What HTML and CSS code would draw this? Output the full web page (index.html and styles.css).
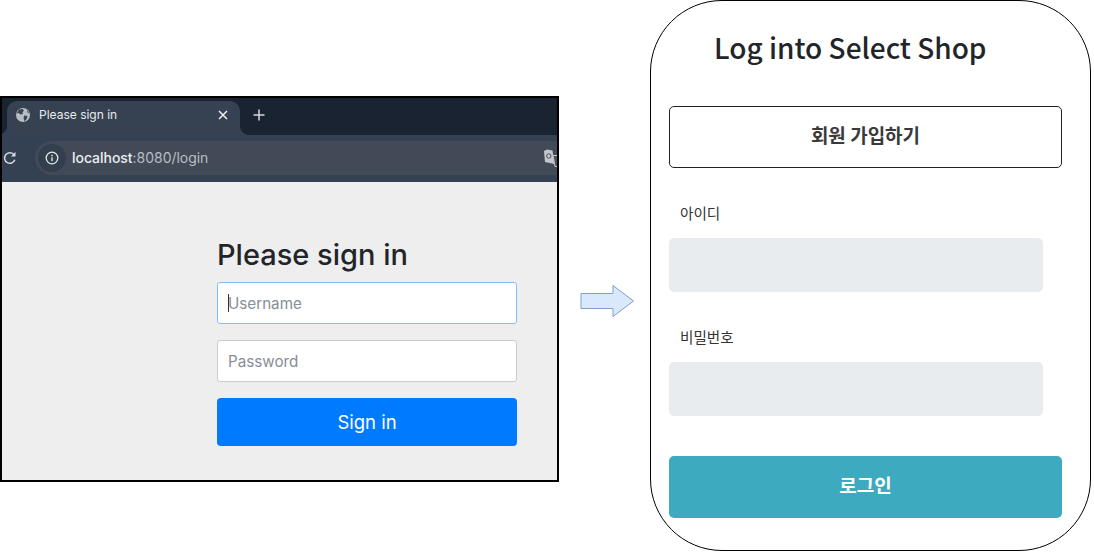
FILE: index.html
```html
<!DOCTYPE html>
<html lang="en">
<head>
  <meta charset="UTF-8" />
  <title>Log into Select Shop</title>
  <link rel="stylesheet" href="styles.css">
</head>
<body>
  <div class="browser">
    <div class="tabbar">
      <div class="tab">
        <svg class="globe" width="16" height="16" viewBox="0 0 16 16">
          <circle cx="8" cy="8" r="7" fill="#b9bdc3" />
          <path d="M4 2.4 7.6 2 9 3.6 7.4 5.4 8 7 5.6 7.6 3.4 6 1.6 6.4ZM9 8.4 12.4 9 12 11.6 9.6 14.4 8.6 11.4ZM12 3 14.4 6 12.4 5.6Z" fill="#3a4656" />
        </svg>
        <span class="tab-title">Please sign in</span>
        <svg class="tab-close" width="10" height="10" viewBox="0 0 10 10">
          <path d="M1 1 9 9M9 1 1 9" stroke="#eef0f2" stroke-width="1.5" fill="none" />
        </svg>
      </div>
      <svg class="tab-new" width="12" height="12" viewBox="0 0 12 12">
        <path d="M6 .5V11.5M.5 6H11.5" stroke="#d5d8dc" stroke-width="1.5" fill="none" />
      </svg>
    </div>
    <div class="toolbar">
      <svg class="reload" width="14" height="14" viewBox="0 0 13 13">
        <path d="M11 8.2A4.9 4.9 0 1 1 10 3.2" stroke="#d5d8dc" stroke-width="1.4" fill="none" />
        <path d="M11.6 .8V5H7.4Z" fill="#d5d8dc" />
      </svg>
      <div class="address">
        <span class="site-info">
          <svg width="14" height="14" viewBox="0 0 14 14">
            <circle cx="7" cy="7" r="5.8" stroke="#e6e8ea" stroke-width="1.3" fill="none" />
            <path d="M7 6.2V10.2M7 3.8V5.2" stroke="#e6e8ea" stroke-width="1.4" fill="none" />
          </svg>
        </span>
        <span class="url"><b>localhost</b>:8080/login</span>
        <svg class="translate" width="16" height="18" viewBox="0 0 16 18">
          <path d="M0 2 3 .5 8.500 1.500 10.500 15 1 13Z" fill="#c4c6cb" />
          <circle cx="4.800" cy="7" r="2.200" stroke="#4a505c" stroke-width="1" fill="none" />
          <path d="M9 6.500H16V17.500H11Z" fill="#4a505c" stroke="#c4c6cb" />
        </svg>
      </div>
    </div>
    <div class="login-page">
      <form class="signin">
        <h2>Please sign in</h2>
        <div class="signin-field">
          <input class="signin-input focused" type="text" placeholder="Username" />
          <span class="caret"></span>
        </div>
        <div class="signin-field">
          <input class="signin-input" type="password" placeholder="Password" />
        </div>
        <button class="signin-btn" type="button">Sign in</button>
      </form>
    </div>
  </div>

  <svg class="arrow" width="56" height="34" viewBox="0 0 56 34">
    <path d="M1 9.500H33V1.500L53.500 17 33 32.500V24.500H1Z" fill="#dae8fc" stroke="#7f9fcc" stroke-width="1" />
  </svg>

  <div class="card">
    <h1>Log into Select Shop</h1>
    <button class="join-btn" type="button">회원 가입하기</button>
    <label class="card-label" for="userId">아이디</label>
    <input class="card-input" id="userId" type="text" />
    <label class="card-label second" for="userPw">비밀번호</label>
    <input class="card-input" id="userPw" type="password" />
    <button class="login-btn" type="button">로그인</button>
  </div>
</body>
</html>
```

FILE: styles.css
```css
html, body {
  height: 100%;
  margin: 0;
  overflow: hidden;
  background-color: #fff;
}

body {
  display: flex;
  align-items: flex-start;
}

/* left: browser capture */
.browser {
  width: 555px;
  height: 382px;
  margin-top: 96px;
  border: 2px solid #000;
  display: flex;
  flex-direction: column;
  overflow: hidden;
  flex-shrink: 0;
  font-family: Inter, "Liberation Sans", sans-serif;
}

.tabbar {
  height: 37px;
  background-color: #1a2332;
  display: flex;
  align-items: flex-end;
  padding-left: 5px;
  flex-shrink: 0;
}

.tab {
  position: relative;
  width: 233px;
  height: 34px;
  box-sizing: border-box;
  background-color: #364252;
  border-radius: 10px 10px 0 0;
  display: flex;
  align-items: center;
  padding: 0 12px 6px 8px;
}

.tab::before, .tab::after {
  content: "";
  position: absolute;
  bottom: 0;
  width: 10px;
  height: 10px;
}

.tab::before {
  left: -10px;
  background: radial-gradient(circle at 0 0, #1a2332 10px, #364252 10.5px);
}

.tab::after {
  right: -10px;
  background: radial-gradient(circle at 100% 0, #1a2332 10px, #364252 10.5px);
}

.tab-title {
  margin-left: 8px;
  margin-bottom: 2px;
  flex: 1;
  font-size: 12px;
  color: #e8eaec;
}

.tab-new {
  margin: 0 0 14px 13px;
}

.toolbar {
  height: 47px;
  box-sizing: border-box;
  padding-bottom: 2px;
  background-color: #344152;
  display: flex;
  align-items: center;
  flex-shrink: 0;
}

.reload {
  margin-left: 1px;
  flex-shrink: 0;
}

.address {
  margin-left: 18px;
  flex: 1;
  height: 34px;
  background-color: #434a57;
  border-radius: 17px 0 0 17px;
  display: flex;
  align-items: center;
  padding-left: 3px;
}

.site-info {
  width: 28px;
  height: 28px;
  border-radius: 50%;
  background-color: #333f4f;
  display: flex;
  align-items: center;
  justify-content: center;
}

.url {
  margin-left: 6px;
  margin-bottom: 1px;
  flex: 1;
  font-size: 14px;
  letter-spacing: -0.03px;
  color: #b9bdc4;
}

.url b {
  font-weight: 500;
  color: #eceef0;
}

.translate {
  margin-right: -3px;
}

.login-page {
  flex: 1;
  background-color: #eee;
  padding-left: 215px;
}

.signin {
  width: 300px;
  padding-top: 55px;
}

.signin h2 {
  margin: 0 0 9px;
  font-size: 29px;
  font-weight: 500;
  line-height: 36px;
  color: #212529;
}

.signin-field {
  position: relative;
  margin-bottom: 16px;
}

.signin-input {
  display: block;
  width: 100%;
  height: 42px;
  box-sizing: border-box;
  padding: 0 10px;
  background-color: #fff;
  border: 1px solid #ccc;
  border-radius: 3px;
  font-family: inherit;
  font-size: 15.2px;
  outline: none;
}

.signin-input::placeholder {
  color: #868e96;
  opacity: 1;
}

.signin-input.focused {
  border-color: #80bdff;
}

.caret {
  position: absolute;
  left: 11px;
  top: 12px;
  width: 1px;
  height: 18px;
  background-color: #333;
}

.signin-btn {
  display: block;
  width: 100%;
  height: 48px;
  background-color: #007bff;
  border: none;
  border-radius: 4px;
  color: #fff;
  font-family: inherit;
  font-size: 18.5px;
}

/* middle arrow */
.arrow {
  margin: 284px 0 0 21px;
  flex-shrink: 0;
}

/* right: select shop card */
.card {
  width: 421px;
  height: 549px;
  margin-left: 14px;
  padding-left: 18px;
  border: 1px solid #000;
  border-radius: 72px;
  flex-shrink: 0;
  display: flex;
  flex-direction: column;
  align-items: flex-start;
  font-family: "Noto Sans CJK KR", sans-serif;
}

.card h1 {
  margin: 25px 0 35px 45px;
  height: 45px;
  font-size: 28px;
  font-weight: 500;
  line-height: 43px;
  color: #212529;
}

.join-btn {
  width: 393px;
  height: 62px;
  padding-bottom: 7px;
  background-color: #fff;
  border: 1px solid #222;
  border-radius: 5px;
  font-family: inherit;
  font-size: 19px;
  font-weight: 700;
  color: #3a3a3a;
}

.card-label {
  margin: 35px 0 15px 11px;
  font-size: 14.6px;
  line-height: 20px;
  color: #333;
}

.card-label.second {
  margin-top: 35px;
}

.card-input {
  width: 374px;
  height: 54px;
  box-sizing: border-box;
  background-color: #e9ecef;
  border: none;
  border-radius: 5px;
}

.login-btn {
  width: 393px;
  height: 62px;
  margin-top: 40px;
  padding-bottom: 6px;
  background-color: #3eaac0;
  border: none;
  border-radius: 5px;
  font-family: inherit;
  font-size: 19px;
  font-weight: 700;
  color: #fff;
}
```
